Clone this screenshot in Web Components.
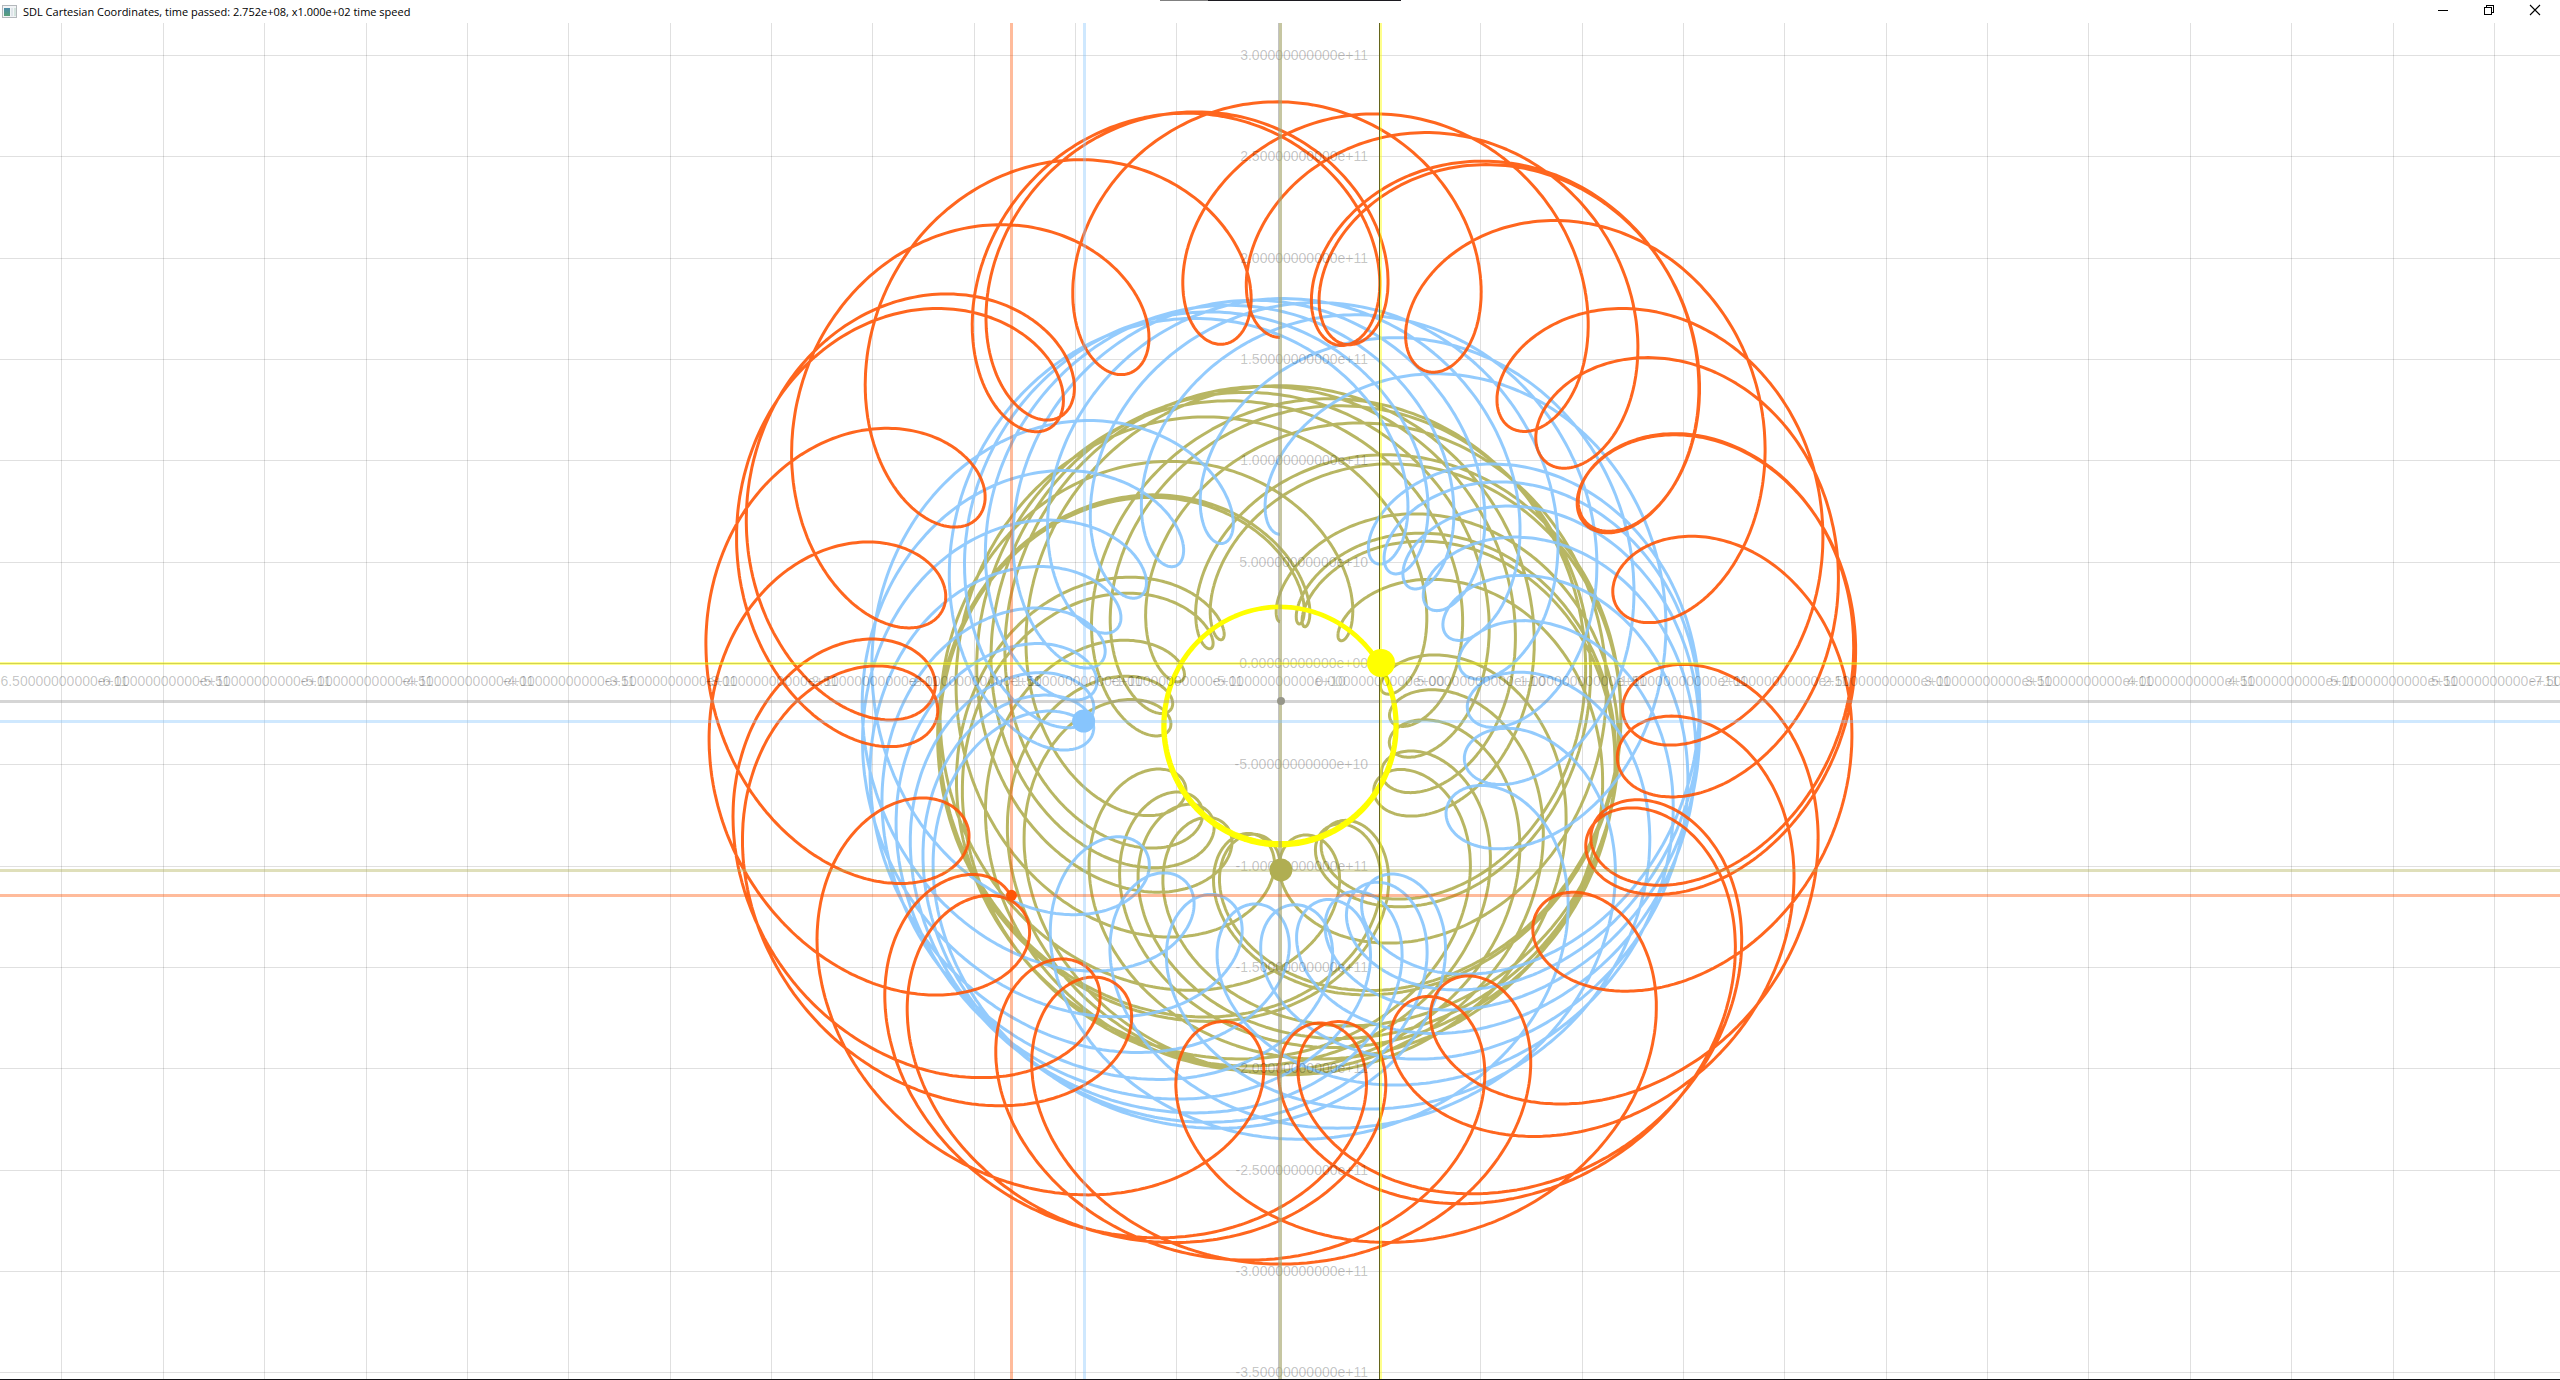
<!DOCTYPE html>
<html lang="en">
<head>
<meta charset="utf-8">
<title>SDL Cartesian Coordinates</title>
<style>
  html, body { height: 100%; margin: 0; background: #fff; }
  body { font-family: "Liberation Sans", Arial, sans-serif; }
</style>
</head>
<body>
<app-window>
  <title-bar slot="bar">SDL Cartesian Coordinates, time passed: 2.752e+08, x1.000e+02 time speed</title-bar>
  <orbit-plane></orbit-plane>
</app-window>

<script>
class AppWindow extends HTMLElement {
  constructor() {
    super();
    this.attachShadow({ mode: "open" }).innerHTML = `
      <style>
        :host { display: flex; flex-direction: column; height: 100%; box-sizing: border-box;
                position: relative; border-bottom: 1px solid #141418; background: #fff; overflow: hidden; }
        .edge { position: absolute; top: 0; left: 50%; margin-left: -120px; width: 241px; height: 1px;
                background: linear-gradient(to right, #808080 20%, #1c1a20 20%); }
        main { flex: 1; min-height: 0; display: flex; }
        ::slotted(orbit-plane) { flex: 1; min-width: 0; }
      </style>
      <slot name="bar"></slot>
      <main><slot></slot></main>
      <div class="edge"></div>`;
  }
}

class TitleBar extends HTMLElement {
  constructor() {
    super();
    this.attachShadow({ mode: "open" }).innerHTML = `
      <style>
        :host { display: flex; align-items: center; height: 23px; padding: 0 2px; background: #fff;
                color: #000; font: 11px/20px "Open Sans", "Noto Sans", sans-serif; }
        .icon { width: 16px; height: 13px; margin-right: 5px; }
        .text { flex: 1; white-space: nowrap; }
        button { width: 46px; height: 20px; padding: 0; border: 0; background: none; margin-bottom: 3px;
                 display: flex; align-items: center; justify-content: center; }
        button svg { width: 12px; height: 12px; }
      </style>
      <svg class="icon" viewBox="0 0 16 13" aria-hidden="true">
        <defs><linearGradient id="g" x2="0" y2="1"><stop stop-color="#4a8aa8"/><stop offset="1" stop-color="#58a078"/></linearGradient></defs>
        <rect x=".5" y=".5" width="14" height="12" fill="#f2f4f6" stroke="#b4b8bc"/>
        <rect x="2" y="3" width="6" height="8" fill="url(#g)"/>
        <rect x="9" y="3" width="2" height="8" fill="#dfe5ea"/>
        <rect x="12" y="3" width="2" height="8" fill="#d3e4de"/>
      </svg>
      <span class="text"><slot></slot></span>
      <button aria-label="Minimize"><svg viewBox="0 0 12 12" shape-rendering="crispEdges"><path d="M1 6.5h10" stroke="#000"/></svg></button>
      <button aria-label="Restore"><svg viewBox="0 0 12 12" shape-rendering="crispEdges" fill="none" stroke="#000"><path d="M1.500 3.500h7v7h-7zM3.500 3.500v-2h7v7h-2"/></svg></button>
      <button aria-label="Close"><svg viewBox="0 0 12 12"><path d="M1 1l10 10M11 1L1 11" stroke="#000" stroke-width="1.100"/></svg></button>`;
  }
}

const UNIT = 101.35;      // px for 5e10 m
const STEPS = 9000;
// a: first semi-major axis in px, e: eccentricity at the start and the end,
// grow: orbit widening caused by the integration step, turns: revolutions so far,
// far: the run starts at aphelion. Everything starts at the top and moves clockwise.
const MERCURY = { a: 117.4, e: [0.2056, 0.2087], grow: 0.0219, turns: 35.6326, far: true };
const PLANETS = [
  { name: "venus", a: 225.5, e: [0.0206, 0.0206], grow: 0.0026, turns: 13.5739, far: false, color: "#b0ae52", r: 11.5 },
  { name: "earth", a: 303.2, e: [0.0167, 0.0167], grow: 0.0011, turns: 8.7137, far: true, color: "#87c5fd", r: 11.5 },
  { name: "mars", a: 462, e: [0.0934, 0.0934], grow: 0.0003, turns: 4.6361, far: true, color: "#ff5505", r: 5.5 }
];

function place(body, f) {
  const g = 3 * body.grow;
  const a = body.a * Math.cbrt(1 + g * f);
  const e = body.e[0] + (body.e[1] - body.e[0]) * f;
  const done = (Math.sqrt(1 + g * f) - 1) / (Math.sqrt(1 + g) - 1);
  const mean = (body.far ? Math.PI : 0) + 2 * Math.PI * body.turns * done;
  let E = mean;
  for (let i = 0; i < 10; i++) E = mean + e * Math.sin(E);
  const along = a * (Math.cos(E) - e);
  const across = a * Math.sqrt(1 - e * e) * Math.sin(E);
  const s = body.far ? -1 : 1;
  return [s * across, -s * along];
}

function trail(body) {
  const pts = [];
  for (let i = 0; i <= STEPS; i++) {
    const m = place(MERCURY, i / STEPS);
    const p = body ? place(body, i / STEPS) : [0, 0];
    pts.push((p[0] - m[0]).toFixed(1) + "," + (p[1] - m[1]).toFixed(1));
  }
  return pts.join(" ");
}

const sci = k => {
  const [m, x] = (k * 5e10).toExponential(11).split("e");
  return m + "e+" + x.slice(1).padStart(2, "0");
};

class OrbitPlane extends HTMLElement {
  constructor() {
    super();
    const m = place(MERCURY, 1);
    const ox = Math.round(-m[0]), oy = Math.round(-m[1]);
    let grid = "", labels = "", trails = "", lines = "", dots = "";

    for (let k = -16; k <= 14; k++) {
      const x = Math.round(ox + k * UNIT);
      if (k) grid += `<rect x="${x}" y="-2000" width="1" height="4000"/>`;
      if (k >= -13 && k <= 12)
        labels += `<text x="${x + 1}" y="-16" text-anchor="middle">${sci(k === 12 ? -15 : k)}</text>`;
    }
    for (let k = -7; k <= 6; k++) {
      const y = Math.round(oy - k * UNIT);
      grid += `<rect x="-4000" y="${y}" width="8000" height="1"/>`;
      labels += `<text x="88" y="${y + 5}" text-anchor="end">${sci(k)}</text>`;
    }

    for (const p of PLANETS) {
      const q = place(p, 1), x = q[0] - m[0], y = q[1] - m[1];
      trails += `<polyline points="${trail(p)}" stroke="${p.color}"/>`;
      lines += `<g fill="${p.color}" opacity=".4"><rect x="${Math.round(x)- (p.name === "venus" ? 1 : 0)}" y="-2000" width="3" height="4000"/>
        <rect x="-4000" y="${Math.round(y) - 2}" width="8000" height="3"/></g>`;
      dots += `<circle cx="${x.toFixed(1)}" cy="${y.toFixed(1)}" r="${p.r}" fill="${p.color}"/>`;
    }

    this.attachShadow({ mode: "open" }).innerHTML = `
      <style>
        :host { display: block; }
        svg { display: block; width: 100%; height: 100%; }
        text { font: 14px "Liberation Sans", Arial, sans-serif; fill: #000; fill-opacity: .24; }
        .grid, .lines { shape-rendering: crispEdges; }
        .trails { fill: none; stroke-width: 3; stroke-opacity: .9; stroke-linejoin: round; }
      </style>
      <svg viewBox="-1280 -679 2560 1356" preserveAspectRatio="xMidYMid slice">
        <g class="grid" fill="#000" fill-opacity=".12">${grid}</g>
        <g class="trails" transform="translate(0 -1)">${trails}<polyline points="${trail(null)}" stroke="#ff0" stroke-opacity="1"/></g>
        <g>${labels}</g>
        <g class="lines">
          <g fill="#969696" opacity=".4"><rect x="-2" y="-2000" width="4" height="4000"/><rect x="-4000" y="-2" width="8000" height="3"/></g>
          ${lines}
          <g fill="#ff0" opacity=".45"><rect x="${ox + 1}" y="-2000" width="2" height="4000"/><rect x="-4000" y="${oy - 1}" width="8000" height="3"/></g>
          <rect x="${ox}" y="-2000" width="1" height="4000" fill="#65651c"/>
          <rect x="-4000" y="${oy}" width="8000" height="1" fill="#b4b430" fill-opacity=".5"/>
        </g>
        <g transform="translate(1 -1)"><circle r="4" fill="#96968a"/>${dots}</g>
        <circle cx="${ox + 2}" cy="${oy}" r="14" fill="#ff0"/>
      </svg>`;
  }
}

customElements.define("orbit-plane", OrbitPlane);
customElements.define("title-bar", TitleBar);
customElements.define("app-window", AppWindow);
</script>
</body>
</html>
